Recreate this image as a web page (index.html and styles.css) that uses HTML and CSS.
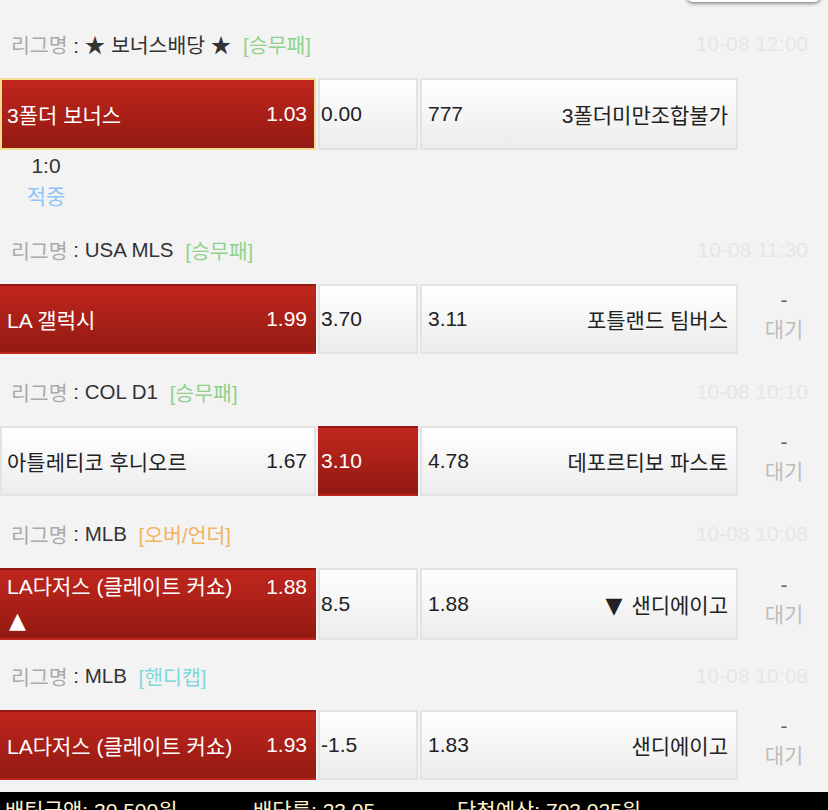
FILE: index.html
```html
<!DOCTYPE html>
<html lang="ko">
<head>
    <meta charset="UTF-8">
    <meta name="viewport" content="width=device-width, initial-scale=1.0">
    <title>배팅내역</title>
    <link rel="stylesheet" href="styles.css">
</head>
<body>

    <div class="popup"></div>

    <div class="bet-list">

        <div class="game">
            <div class="league">
                <span class="label">리그명</span> : ★ 보너스배당 ★ <span class="type win">[승무패]</span>
                <span class="date">10-08 12:00</span>
            </div>
            <div class="row">
                <div class="cell home picked chosen"><span>3폴더 보너스</span><span>1.03</span></div>
                <div class="cell draw">0.00</div>
                <div class="cell away"><span>777</span><span>3폴더미만조합불가</span></div>
                <div class="status"></div>
            </div>
            <div class="result">
                <div class="score">1:0</div>
                <div class="hit">적중</div>
            </div>
        </div>

        <div class="game">
            <div class="league">
                <span class="label">리그명</span> : USA MLS <span class="type win">[승무패]</span>
                <span class="date">10-08 11:30</span>
            </div>
            <div class="row">
                <div class="cell home picked"><span>LA 갤럭시</span><span>1.99</span></div>
                <div class="cell draw">3.70</div>
                <div class="cell away"><span>3.11</span><span>포틀랜드 팀버스</span></div>
                <div class="status"><span class="dash">-</span><span class="wait">대기</span></div>
            </div>
        </div>

        <div class="game">
            <div class="league">
                <span class="label">리그명</span> : COL D1 <span class="type win">[승무패]</span>
                <span class="date">10-08 10:10</span>
            </div>
            <div class="row">
                <div class="cell home"><span>아틀레티코 후니오르</span><span>1.67</span></div>
                <div class="cell draw picked">3.10</div>
                <div class="cell away"><span>4.78</span><span>데포르티보 파스토</span></div>
                <div class="status"><span class="dash">-</span><span class="wait">대기</span></div>
            </div>
        </div>

        <div class="game">
            <div class="league">
                <span class="label">리그명</span> : MLB <span class="type over">[오버/언더]</span>
                <span class="date">10-08 10:08</span>
            </div>
            <div class="row">
                <div class="cell home picked two-line"><span class="name">LA다저스 (클레이트 커쇼)<br><span class="arrow">▲</span></span><span class="odds">1.88</span></div>
                <div class="cell draw">8.5</div>
                <div class="cell away"><span>1.88</span><span><span class="arrow down">▼</span>샌디에이고</span></div>
                <div class="status"><span class="dash">-</span><span class="wait">대기</span></div>
            </div>
        </div>

        <div class="game">
            <div class="league">
                <span class="label">리그명</span> : MLB <span class="type handi">[핸디캡]</span>
                <span class="date">10-08 10:08</span>
            </div>
            <div class="row">
                <div class="cell home picked"><span>LA다저스 (클레이트 커쇼)</span><span>1.93</span></div>
                <div class="cell draw">-1.5</div>
                <div class="cell away"><span>1.83</span><span>샌디에이고</span></div>
                <div class="status"><span class="dash">-</span><span class="wait">대기</span></div>
            </div>
        </div>

    </div>

    <div class="summary">
        <span class="amount">배팅금액: 30,500원</span>
        <span class="rate">배당률: 23.05</span>
        <span class="expect">당첨예상: 703,025원</span>
    </div>

</body>
</html>
```

FILE: styles.css
```css
body {
    font-family: "Liberation Sans", "Noto Sans CJK KR", sans-serif;
    background-color: #f3f3f3;
    color: #222;
    margin: 0;
    padding: 0;
    position: relative;
}
.popup {
    position: absolute;
    top: -40px;
    left: 687px;
    width: 133px;
    height: 42px;
    background-color: #fff;
    border-radius: 6px;
    box-shadow: 0 1px 4px rgba(0, 0, 0, 0.6);
}
.bet-list {
    padding-top: 6px;
}
.league {
    display: flex;
    align-items: center;
    height: 40px;
    margin: 18px 0 14px;
    padding: 0 20px 0 11px;
    font-size: 20.5px;
    color: #333;
    white-space: pre;
}
.league .label {
    color: #aaa;
}
.league .type {
    margin-left: 6px;
}
.type.win {
    color: #90d28b;
}
.type.over {
    color: #f4b25e;
}
.type.handi {
    color: #80d8dc;
}
.league .date {
    margin-left: auto;
    color: #e6e6e6;
    font-size: 21px;
}
.row {
    display: grid;
    grid-template-columns: 316px 100px 318px 1fr;
    column-gap: 2px;
    height: 70px;
}
.cell {
    display: flex;
    justify-content: space-between;
    align-items: center;
    box-sizing: border-box;
    font-size: 21px;
    background: linear-gradient(#ffffff, #ececec);
    border: 2px solid #e3e3e3;
    color: #222;
}
.cell.home {
    padding: 0 7px 0 5px;
}
.cell.draw {
    padding: 0 1px;
}
.cell.away {
    padding: 0 8px 0 6px;
}
.cell.picked {
    background: linear-gradient(#c0261d, #931a12);
    border-color: transparent;
    color: #fff;
}
.cell.chosen {
    border-color: #f6dc90;
    height: 72px;
}
.cell.two-line .name {
    line-height: 34px;
}
.cell.two-line .odds {
    align-self: flex-start;
    line-height: 34px;
}
.arrow {
    font-family: "DejaVu Sans", sans-serif;
    font-size: 22px;
    padding-left: 2px;
}
.arrow.down {
    margin-right: 9px;
}
.status {
    display: flex;
    flex-direction: column;
    justify-content: center;
    align-items: center;
    padding-bottom: 8px;
    font-size: 21px;
    line-height: 30px;
}
.status .dash {
    color: #666;
}
.status .wait {
    color: #bdbdbd;
}
.result {
    width: 92px;
    height: 62px;
    text-align: center;
    font-size: 21px;
    line-height: 31px;
    margin-top: 2px;
}
.result .score {
    color: #333;
}
.result .hit {
    color: #8ec5f5;
}
.summary {
    display: flex;
    margin-top: 12px;
    padding: 4px 5px;
    background-color: #000;
    color: #fff4cc;
    font-size: 21px;
    line-height: 30px;
}
.summary .amount {
    width: 248px;
}
.summary .rate {
    width: 204px;
}
```
